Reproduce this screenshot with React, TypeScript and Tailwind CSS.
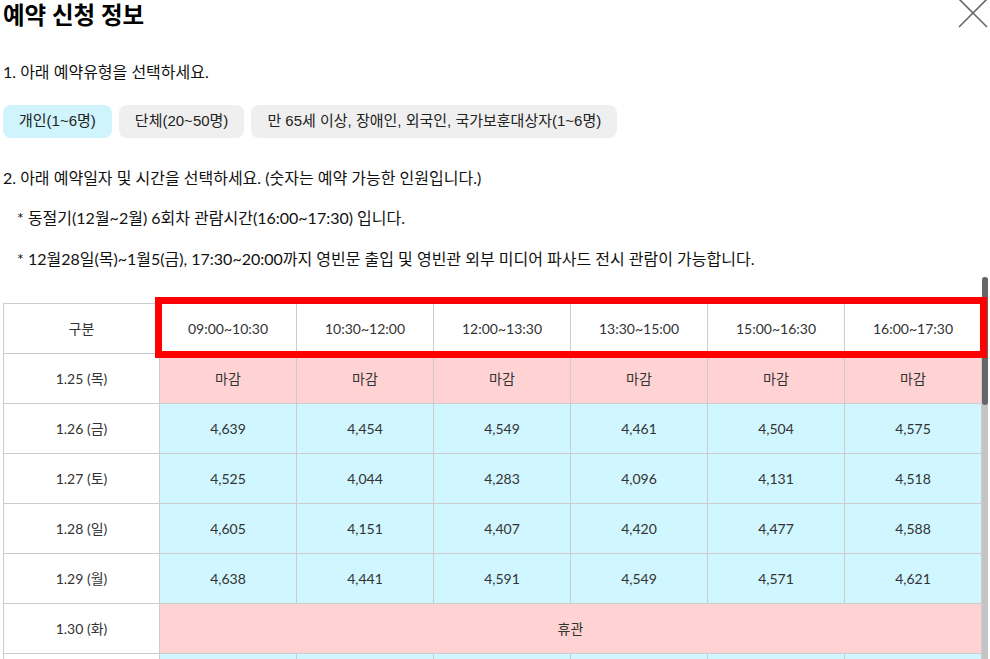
import React from "react";

const times = ["09:00~10:30", "10:30~12:00", "12:00~13:30", "13:30~15:00", "15:00~16:30", "16:00~17:30"];

type Row = { date: string; kind: "closed" | "holiday" | "open"; counts?: number[] };

const rows: Row[] = [
  { date: "1.25 (목)", kind: "closed" },
  { date: "1.26 (금)", kind: "open", counts: [4639, 4454, 4549, 4461, 4504, 4575] },
  { date: "1.27 (토)", kind: "open", counts: [4525, 4044, 4283, 4096, 4131, 4518] },
  { date: "1.28 (일)", kind: "open", counts: [4605, 4151, 4407, 4420, 4477, 4588] },
  { date: "1.29 (월)", kind: "open", counts: [4638, 4441, 4591, 4549, 4571, 4621] },
  { date: "1.30 (화)", kind: "holiday" },
  { date: "1.31 (수)", kind: "open", counts: [4702, 4388, 4516, 4630, 4655, 4690] },
  { date: "2.1 (목)", kind: "open", counts: [4811, 4602, 4733, 4719, 4764, 4803] },
  { date: "2.2 (금)", kind: "open", counts: [4780, 4577, 4612, 4698, 4741, 4788] },
  { date: "2.3 (토)", kind: "open", counts: [4690, 4402, 4455, 4521, 4600, 4715] },
  { date: "2.4 (일)", kind: "open", counts: [4733, 4512, 4567, 4589, 4640, 4752] },
  { date: "2.5 (월)", kind: "open", counts: [4850, 4701, 4780, 4792, 4811, 4860] },
  { date: "2.6 (화)", kind: "holiday" },
];

const cell = "border border-[#cccccc] text-center align-middle h-[50px] p-0";

export default function App() {
  return (
    <div
      className="relative w-[990px] h-[659px] overflow-hidden bg-white text-[#111]"
      style={{ fontFamily: 'Lato, "Noto Sans CJK KR", sans-serif' }}
    >
      <div className="pl-[3px]">
        <div className="flex justify-between h-[30px]">
          <h1 className="text-[23.5px] leading-[30px] font-bold text-black">예약 신청 정보</h1>
          <svg width="32" height="32" viewBox="0 0 32 32" className="-mt-[3px] mr-[1px]">
            <line x1="2" y1="2" x2="30" y2="30" stroke="#666" strokeWidth="1.6" />
            <line x1="30" y1="2" x2="2" y2="30" stroke="#666" strokeWidth="1.6" />
          </svg>
        </div>

        <p className="mt-[32px] text-[16px] leading-[20px]">1. 아래 예약유형을 선택하세요.</p>

        <div
          className="mt-[23px] flex gap-[7px] text-[15px] text-[#222]"
          style={{ fontFamily: '"Liberation Sans", "Noto Sans CJK KR", sans-serif' }}
        >
          <button className="h-[33px] px-[16px] rounded-[8px] bg-[#cff4fc]">개인(1~6명)</button>
          <button className="h-[33px] px-[16px] rounded-[8px] bg-[#efefef]">단체(20~50명)</button>
          <button className="h-[33px] px-[16px] rounded-[8px] bg-[#efefef]">
            만 65세 이상, 장애인, 외국인, 국가보훈대상자(1~6명)
          </button>
        </div>

        <p className="mt-[30px] text-[16px] leading-[20px]">
          2. 아래 예약일자 및 시간을 선택하세요. (숫자는 예약 가능한 인원입니다.)
        </p>
        <p className="mt-[20px] pl-[14px] text-[16px] leading-[20px]">
          * 동절기(12월~2월) 6회차 관람시간(16:00~17:30) 입니다.
        </p>
        <p className="mt-[21px] pl-[14px] text-[16px] leading-[20px]">
          * 12월28일(목)~1월5(금), 17:30~20:00까지 영빈문 출입 및 영빈관 외부 미디어 파사드 전시 관람이 가능합니다.
        </p>
      </div>

      {/* table area with its scrollbar */}
      <div className="mt-[8px] flex h-[382px]">
        <div className="w-[982px] overflow-hidden pt-[26px] pl-[3px]">
          <table className="w-[978px] table-fixed border-collapse text-[14px] text-[#333]">
            <colgroup>
              <col className="w-[156px]" />
              {times.map((t) => (
                <col key={t} className="w-[137px]" />
              ))}
            </colgroup>
            <thead>
              <tr>
                <th className={`${cell} font-normal bg-white`}>구분</th>
                {times.map((t) => (
                  <th key={t} className={`${cell} font-normal bg-white`}>{t}</th>
                ))}
              </tr>
            </thead>
            <tbody>
              {rows.map((r) => (
                <tr key={r.date}>
                  <td className={`${cell} bg-white`}>{r.date}</td>
                  {r.kind === "closed" &&
                    times.map((t) => (
                      <td key={t} className={`${cell} bg-[#ffd3d3]`}>마감</td>
                    ))}
                  {r.kind === "holiday" && (
                    <td colSpan={6} className={`${cell} bg-[#ffd3d3]`}>휴관</td>
                  )}
                  {r.kind === "open" &&
                    r.counts!.map((c, i) => (
                      <td key={i} className={`${cell} bg-[#d0f6ff]`}>{c.toLocaleString("en-US")}</td>
                    ))}
                </tr>
              ))}
            </tbody>
          </table>
        </div>
        <div className="w-[6px] h-full rounded-t-full bg-[#c4c4c4]">
          <div className="h-[128px] rounded-full bg-[#666666]" />
        </div>
      </div>

      {/* highlight box over the time header */}
      <div className="absolute left-[155px] top-[297px] w-[832px] h-[61px] border-[7px] border-[#ff0000] pointer-events-none" />
    </div>
  );
}
